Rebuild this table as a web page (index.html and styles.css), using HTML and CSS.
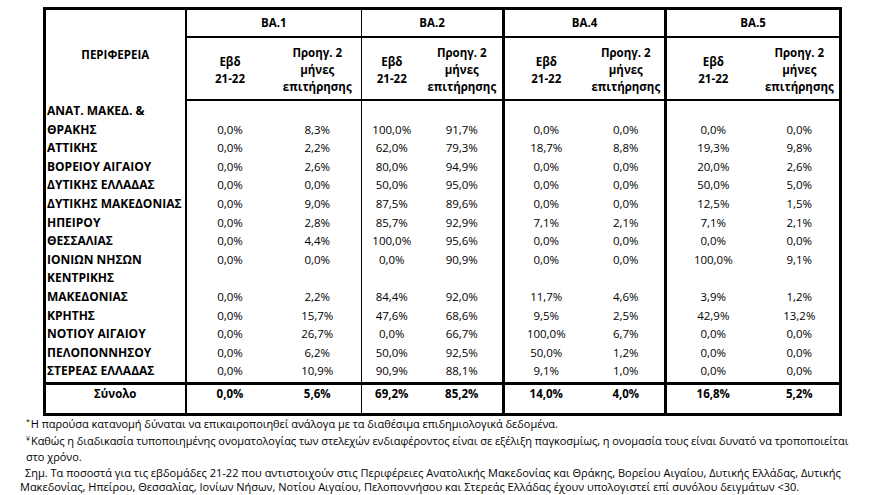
FILE: index.html
```html
<!DOCTYPE html>
<html lang="el">
<head>
<meta charset="utf-8">
<title>Πίνακας ΒΑ ανά Περιφέρεια</title>
<link rel="stylesheet" href="styles.css">
</head>
<body>
<div class="page">
  <table class="data">
    <colgroup>
      <col class="c-reg">
      <col class="c-a1"><col class="c-b1">
      <col class="c-a2"><col class="c-b2">
      <col class="c-a4"><col class="c-b4">
      <col class="c-a5"><col class="c-b5">
    </colgroup>
    <thead>
      <tr class="h1">
        <th rowspan="2" class="reg-h">ΠΕΡΙΦΕΡΕΙΑ</th>
        <th colspan="2" class="g1 gl">ΒΑ.1</th>
        <th colspan="2" class="g2 gl">ΒΑ.2</th>
        <th colspan="2" class="g4 gl">ΒΑ.4</th>
        <th colspan="2" class="g5 gl">ΒΑ.5</th>
      </tr>
      <tr class="h2">
        <th class="g1 gl">Εβδ<br>21-22</th><th>Προηγ. 2<br>μήνες<br>επιτήρησης</th>
        <th class="g2 gl">Εβδ<br>21-22</th><th>Προηγ. 2<br>μήνες<br>επιτήρησης</th>
        <th class="g4 gl">Εβδ<br>21-22</th><th>Προηγ. 2<br>μήνες<br>επιτήρησης</th>
        <th class="g5 gl">Εβδ<br>21-22</th><th>Προηγ. 2<br>μήνες<br>επιτήρησης</th>
      </tr>
    </thead>
    <tbody>
      <tr class="first"><td class="reg">ΑΝΑΤ. ΜΑΚΕΔ. &amp; ΘΡΑΚΗΣ</td><td class="g1">0,0%</td><td>8,3%</td><td class="g2">100,0%</td><td>91,7%</td><td class="g4">0,0%</td><td>0,0%</td><td class="g5">0,0%</td><td>0,0%</td></tr>
      <tr><td class="reg">ΑΤΤΙΚΗΣ</td><td class="g1">0,0%</td><td>2,2%</td><td class="g2">62,0%</td><td>79,3%</td><td class="g4">18,7%</td><td>8,8%</td><td class="g5">19,3%</td><td>9,8%</td></tr>
      <tr><td class="reg">ΒΟΡΕΙΟΥ ΑΙΓΑΙΟΥ</td><td class="g1">0,0%</td><td>2,6%</td><td class="g2">80,0%</td><td>94,9%</td><td class="g4">0,0%</td><td>0,0%</td><td class="g5">20,0%</td><td>2,6%</td></tr>
      <tr><td class="reg">ΔΥΤΙΚΗΣ ΕΛΛΑΔΑΣ</td><td class="g1">0,0%</td><td>0,0%</td><td class="g2">50,0%</td><td>95,0%</td><td class="g4">0,0%</td><td>0,0%</td><td class="g5">50,0%</td><td>5,0%</td></tr>
      <tr><td class="reg">ΔΥΤΙΚΗΣ ΜΑΚΕΔΟΝΙΑΣ</td><td class="g1">0,0%</td><td>9,0%</td><td class="g2">87,5%</td><td>89,6%</td><td class="g4">0,0%</td><td>0,0%</td><td class="g5">12,5%</td><td>1,5%</td></tr>
      <tr><td class="reg">ΗΠΕΙΡΟΥ</td><td class="g1">0,0%</td><td>2,8%</td><td class="g2">85,7%</td><td>92,9%</td><td class="g4">7,1%</td><td>2,1%</td><td class="g5">7,1%</td><td>2,1%</td></tr>
      <tr><td class="reg">ΘΕΣΣΑΛΙΑΣ</td><td class="g1">0,0%</td><td>4,4%</td><td class="g2">100,0%</td><td>95,6%</td><td class="g4">0,0%</td><td>0,0%</td><td class="g5">0,0%</td><td>0,0%</td></tr>
      <tr><td class="reg">ΙΟΝΙΩΝ ΝΗΣΩΝ</td><td class="g1">0,0%</td><td>0,0%</td><td class="g2">0,0%</td><td>90,9%</td><td class="g4">0,0%</td><td>0,0%</td><td class="g5">100,0%</td><td>9,1%</td></tr>
      <tr><td class="reg">ΚΕΝΤΡΙΚΗΣ ΜΑΚΕΔΟΝΙΑΣ</td><td class="g1">0,0%</td><td>2,2%</td><td class="g2">84,4%</td><td>92,0%</td><td class="g4">11,7%</td><td>4,6%</td><td class="g5">3,9%</td><td>1,2%</td></tr>
      <tr><td class="reg">ΚΡΗΤΗΣ</td><td class="g1">0,0%</td><td>15,7%</td><td class="g2">47,6%</td><td>68,6%</td><td class="g4">9,5%</td><td>2,5%</td><td class="g5">42,9%</td><td>13,2%</td></tr>
      <tr><td class="reg">ΝΟΤΙΟΥ ΑΙΓΑΙΟΥ</td><td class="g1">0,0%</td><td>26,7%</td><td class="g2">0,0%</td><td>66,7%</td><td class="g4">100,0%</td><td>6,7%</td><td class="g5">0,0%</td><td>0,0%</td></tr>
      <tr><td class="reg">ΠΕΛΟΠΟΝΝΗΣΟΥ</td><td class="g1">0,0%</td><td>6,2%</td><td class="g2">50,0%</td><td>92,5%</td><td class="g4">50,0%</td><td>1,2%</td><td class="g5">0,0%</td><td>0,0%</td></tr>
      <tr class="last"><td class="reg">ΣΤΕΡΕΑΣ ΕΛΛΑΔΑΣ</td><td class="g1">0,0%</td><td>10,9%</td><td class="g2">90,9%</td><td>88,1%</td><td class="g4">9,1%</td><td>1,0%</td><td class="g5">0,0%</td><td>0,0%</td></tr>
      <tr class="total"><td class="reg-t">Σύνολο</td><td class="g1">0,0%</td><td>5,6%</td><td class="g2">69,2%</td><td>85,2%</td><td class="g4">14,0%</td><td>4,0%</td><td class="g5">16,8%</td><td>5,2%</td></tr>
    </tbody>
  </table>

  <div class="notes">
    <p class="note"><sup class="mark">*</sup>Η παρούσα κατανομή δύναται να επικαιροποιηθεί ανάλογα με τα διαθέσιμα επιδημιολογικά δεδομένα.</p>
    <p class="note"><sup class="mark">¥</sup>Καθώς η διαδικασία τυποποιημένης ονοματολογίας των στελεχών ενδιαφέροντος είναι σε εξέλιξη παγκοσμίως, η ονομασία τους είναι δυνατό να τροποποιείται<br>στο χρόνο.</p>
    <p class="note-sm">Σημ. Τα ποσοστά για τις εβδομάδες 21-22 που αντιστοιχούν στις Περιφέρειες Ανατολικής Μακεδονίας και Θράκης, Βορείου Αιγαίου, Δυτικής Ελλάδας, Δυτικής<br><span class="cont">Μακεδονίας, Ηπείρου, Θεσσαλίας, Ιονίων Νήσων, Νοτίου Αιγαίου, Πελοποννήσου και Στερεάς Ελλάδας έχουν υπολογιστεί επί συνόλου δειγμάτων &lt;30.</span></p>
  </div>
</div>
</body>
</html>
```

FILE: styles.css
```css
html, body {
  margin: 0;
  padding: 0;
  background: #ffffff;
}

body {
  font-family: "Open Sans", "Noto Sans", "DejaVu Sans", sans-serif;
  color: #000000;
}

.page {
  padding: 7px 0 0 43px;
}

.data {
  border-collapse: collapse;
  table-layout: fixed;
  width: 796px;
  border: 3px solid #000;
  font-size: 11.5px;
}

.c-reg { width: 141px; }
.c-a1 { width: 88px; }
.c-b1 { width: 88px; }
.c-a2 { width: 60px; }
.c-b2 { width: 82px; }
.c-a4 { width: 84px; }
.c-b4 { width: 78px; }
.c-a5 { width: 94px; }
.c-b5 { width: 81px; }

.data th {
  font-weight: 700;
  text-align: center;
  padding: 0;
}

.h1 th {
  height: 24px;
  line-height: 17px;
  vertical-align: middle;
  border-bottom: 2px solid #000;
  padding-bottom: 2px;
}

.h2 th {
  height: 59px;
  line-height: 17px;
  vertical-align: middle;
  border-bottom: 2px solid #000;
  padding-top: 2px;
  white-space: nowrap;
}

.reg-h {
  vertical-align: middle;
  border-right: 2px solid #000;
  padding-bottom: 4px;
}

.data .reg-h {
  border-bottom: none;
}

.g1 { border-left: 2px solid #000; }
.g2 { border-left: 1px solid #000; }
.g4 { border-left: 3px solid #000; }
.g5 { border-left: 3px solid #000; }

.data td {
  padding: 0;
  line-height: 18.6px;
  text-align: center;
  vertical-align: bottom;
  white-space: nowrap;
}

.data td.reg {
  text-align: left;
  font-weight: 700;
  font-size: 12px;
  white-space: normal;
  padding-left: 1px;
  border-right: 2px solid #000;
}

.first td {
  padding-top: 2px;
}

.last td {
  padding-bottom: 1px;
}

.total td {
  border-top: 3px solid #000;
  font-weight: 700;
  vertical-align: top;
  height: 28px;
  padding-top: 0;
}

.data td.reg-t {
  text-align: center;
  border-right: 2px solid #000;
}

.notes {
  margin-left: -23px;
  font-size: 11px;
  line-height: 16.6px;
}

.note {
  margin: 0;
  padding-left: 6px;
  white-space: nowrap;
  letter-spacing: -0.05px;
}

.mark {
  font-size: 7px;
  line-height: 0;
  vertical-align: 4px;
  margin-right: 1px;
}

.note-sm {
  margin: 0;
  padding-left: 5px;
  line-height: 14.5px;
  white-space: nowrap;
  padding-top: 0;
}

.cont {
  margin-left: -5px;
}
```
